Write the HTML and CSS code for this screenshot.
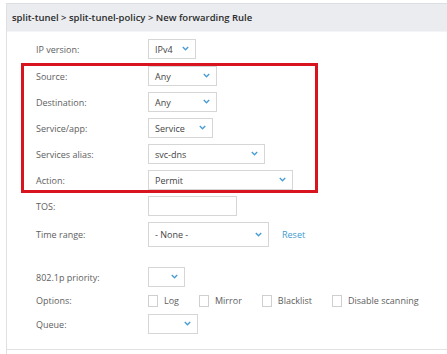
FILE: index.html
```html
<!DOCTYPE html>
<html lang="en">
<head>
    <meta charset="UTF-8">
    <meta name="viewport" content="width=device-width, initial-scale=1.0">
    <title>New forwarding Rule</title>
    <link rel="stylesheet" href="styles.css">
</head>
<body>

<div class="panel">
    <div class="panel-title">split-tunel &gt; split-tunel-policy &gt; New forwarding Rule</div>

    <div class="form">
        <div class="row">
            <span class="label">IP version:</span>
            <div class="select w-ip"><span>IPv4</span><svg class="chev" viewBox="0 0 7 5"><polyline points="0.8,1 3.5,3.8 6.2,1"/></svg></div>
        </div>

        <!-- recuadro rojo de resaltado -->
        <div class="highlight">
            <div class="row">
                <span class="label">Source:</span>
                <div class="select w-any"><span>Any</span><svg class="chev" viewBox="0 0 7 5"><polyline points="0.8,1 3.5,3.8 6.2,1"/></svg></div>
            </div>
            <div class="row">
                <span class="label">Destination:</span>
                <div class="select w-any"><span>Any</span><svg class="chev" viewBox="0 0 7 5"><polyline points="0.8,1 3.5,3.8 6.2,1"/></svg></div>
            </div>
            <div class="row">
                <span class="label">Service/app:</span>
                <div class="select w-service"><span>Service</span><svg class="chev" viewBox="0 0 7 5"><polyline points="0.8,1 3.5,3.8 6.2,1"/></svg></div>
            </div>
            <div class="row">
                <span class="label">Services alias:</span>
                <div class="select w-alias"><span>svc-dns</span><svg class="chev" viewBox="0 0 7 5"><polyline points="0.8,1 3.5,3.8 6.2,1"/></svg></div>
            </div>
            <div class="row">
                <span class="label">Action:</span>
                <div class="select w-action"><span>Permit</span><svg class="chev" viewBox="0 0 7 5"><polyline points="0.8,1 3.5,3.8 6.2,1"/></svg></div>
            </div>
        </div>

        <div class="row">
            <span class="label">TOS:</span>
            <div class="input w-tos"></div>
        </div>
        <div class="row tall">
            <span class="label">Time range:</span>
            <div class="select w-time"><span>- None -</span><svg class="chev" viewBox="0 0 7 5"><polyline points="0.8,1 3.5,3.8 6.2,1"/></svg></div>
            <a href="#" class="reset">Reset</a>
        </div>

        <div class="row spaced">
            <span class="label">802.1p priority:</span>
            <div class="select w-prio"><svg class="chev" viewBox="0 0 7 5"><polyline points="0.8,1 3.5,3.8 6.2,1"/></svg></div>
        </div>
        <div class="row short">
            <span class="label">Options:</span>
            <div class="checks">
                <label class="check"><span class="box"></span>Log</label>
                <label class="check"><span class="box"></span>Mirror</label>
                <label class="check"><span class="box"></span>Blacklist</label>
                <label class="check"><span class="box"></span>Disable scanning</label>
            </div>
        </div>
        <div class="row">
            <span class="label">Queue:</span>
            <div class="select w-queue"><svg class="chev" viewBox="0 0 7 5"><polyline points="0.8,1 3.5,3.8 6.2,1"/></svg></div>
        </div>
    </div>
</div>

</body>
</html>
```

FILE: styles.css
```css
/* Formulario de regla de reenvío */
body {
    margin: 0;
    font-family: 'Open Sans', sans-serif;
    font-size: 9px;
    color: #5e5e5e;
    background: #ffffff;
    padding-top: 3px;
    min-height: 351px;
}
.panel {
    margin-left: 6px;
    border-left: 1px solid #e0e0e0;
    min-height: 351px;
}
.panel-title {
    height: 27px;
    line-height: 27px;
    padding-left: 5px;
    background: #eaecef;
    border-top: 1px solid #dcdfe2;
    border-bottom: 1px solid #f3f4f6;
    font-weight: 600;
    font-size: 9.5px;
    color: #2b2b2b;
}
.form {
    display: flex;
    flex-direction: column;
    gap: 6px;
    padding: 7px 0 15px 14px;
    border-bottom: 1px solid #e2e2e2;
}
.row {
    display: flex;
    align-items: center;
    height: 20px;
    padding-left: 15px;
}
.row.tall {
    height: 25px;
}
.row.short {
    height: 15px;
}
.row.spaced {
    margin-top: 14px;
}
.label {
    width: 112px;
    flex-shrink: 0;
}
.highlight {
    display: flex;
    flex-direction: column;
    gap: 6px;
    width: 291px;
    border: 3px solid #d8141f;
    margin: -2px 0 -3px 0;
}
.highlight .row {
    padding-left: 12px;
}
.select, .input {
    box-sizing: border-box;
    height: 100%;
    border: 1px solid #d6d6d6;
    background: #fff;
    display: flex;
    align-items: center;
    padding-left: 6px;
    position: relative;
    color: #444;
}
.chev {
    position: absolute;
    right: 6px;
    top: 50%;
    width: 7px;
    height: 5px;
    margin-top: -3px;
    fill: none;
    stroke: #4b9ed3;
    stroke-width: 1.4;
}
.w-ip { width: 48px; }
.w-any { width: 69px; }
.w-service { width: 65px; }
.w-alias { width: 117px; }
.w-action { width: 145px; }
.w-tos { width: 89px; }
.w-time { width: 121px; }
.w-prio { width: 37px; }
.w-queue { width: 50px; }
.reset {
    margin-left: 13px;
    color: #3d9bd1;
    text-decoration: none;
}
.checks {
    display: flex;
    align-items: center;
    white-space: nowrap;
}
.check {
    display: flex;
    align-items: center;
    flex-shrink: 0;
    margin-right: 20px;
}
.check .box {
    box-sizing: border-box;
    width: 10px;
    height: 12px;
    border: 1px solid #cfcfcf;
    margin-right: 6px;
}
```
